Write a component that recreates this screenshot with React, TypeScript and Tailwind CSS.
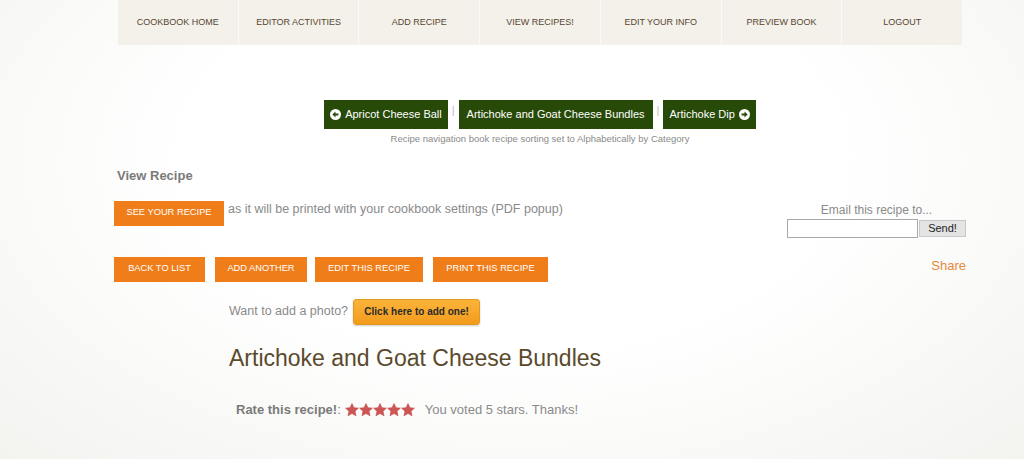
import React from "react";

const navItems = [
  "Cookbook Home",
  "Editor Activities",
  "Add Recipe",
  "View Recipes!",
  "Edit Your Info",
  "Preview Book",
  "Logout",
];

const CircleArrow = ({ dir }: { dir: "left" | "right" }) => (
  <svg width="11" height="11" viewBox="0 0 12 12" className="shrink-0">
    <circle cx="6" cy="6" r="6" fill="#ffffff" />
    {dir === "left" ? (
      <path d="M2.6 6 L6 2.8 V4.8 H9.2 V7.2 H6 V9.2 Z" fill="#2a4a0c" />
    ) : (
      <path d="M9.4 6 L6 2.8 V4.8 H2.8 V7.2 H6 V9.2 Z" fill="#2a4a0c" />
    )}
  </svg>
);

const Star = () => (
  <svg width="14" height="14" viewBox="0 0 24 24">
    <path
      d="M12 1 L15.3 8 L23 8.8 L17.2 14 L18.9 22 L12 18 L5.1 22 L6.8 14 L1 8.8 L8.7 8 Z"
      fill="#cf5454"
      stroke="#c24848"
      strokeWidth="1"
      strokeLinejoin="round"
    />
  </svg>
);

const OrangeBtn = ({ label, w }: { label: string; w: string }) => (
  <div
    className={`${w} flex h-[25px] items-center justify-center bg-[#ee7d1a] text-[9.3px] uppercase text-white`}
  >
    {label}
  </div>
);

const App = () => {
  return (
    <div className="min-h-[459px] w-[1024px] bg-[radial-gradient(ellipse_at_50%_35%,#ffffff_0%,#ffffff_45%,#f3f3f0_100%)] font-['Liberation_Sans',Arial,sans-serif]">
      <div className="ml-[114px] w-[852px]">
        {/* nav */}
        <nav className="mx-[4px] flex h-[45px] bg-[#f3f1ea]">
          {navItems.map((item, i) => (
            <div
              key={item}
              className={`flex flex-1 items-center justify-center text-[9px] uppercase text-[#574631] ${
                i > 0 ? "border-l border-[#fbfaf6]" : ""
              }`}
            >
              {item}
            </div>
          ))}
        </nav>

        {/* recipe navigation */}
        <div className="mt-[55px] flex items-center justify-center">
          <div className="flex h-[29px] items-center gap-[4px] bg-[#284a08] px-[6px] text-[11px] text-white">
            <CircleArrow dir="left" />
            Apricot Cheese Ball
          </div>
          <span className="mx-[4px] -mt-[8px] text-[11px] text-[#bbbbbb]">|</span>
          <div className="flex h-[29px] items-center bg-[#284a08] px-[8px] text-[11px] text-white">
            Artichoke and Goat Cheese Bundles
          </div>
          <span className="mx-[4px] -mt-[8px] text-[11px] text-[#bbbbbb]">|</span>
          <div className="flex h-[29px] items-center gap-[4px] bg-[#284a08] px-[6px] text-[11px] text-white">
            Artichoke Dip
            <CircleArrow dir="right" />
          </div>
        </div>
        <p className="mt-[3px] text-center text-[9.5px] text-[#8a8a8a]">
          Recipe navigation book recipe sorting set to Alphabetically by Category
        </p>

        <h2 className="mt-[20px] pl-[3px] text-[13px] font-bold text-[#7a7a7a]">View Recipe</h2>

        {/* see recipe + email */}
        <div className="mt-[15px] flex items-start justify-between">
          <div className="flex items-start">
            <OrangeBtn label="See your recipe" w="w-[110px]" />
            <span className="ml-[4px] -mt-[1px] text-[12.5px] text-[#8a8a8a]">
              as it will be printed with your cookbook settings (PDF popup)
            </span>
          </div>
          <div className="mt-[2px] flex flex-col items-center">
            <span className="text-[12px] leading-[14px] text-[#8a8a8a]">Email this recipe to...</span>
            <div className="mt-[2px] flex items-center">
              <div className="h-[19px] w-[131px] border border-[#a9a9a9] bg-white" />
              <div className="ml-[1px] flex h-[17px] w-[47px] items-center justify-center border border-[#c8c8c8] bg-[#e4e4e4] text-[11px] text-[#222]">
                Send!
              </div>
            </div>
          </div>
        </div>

        {/* action buttons */}
        <div className="mt-[19px] flex items-start justify-between">
          <div className="flex">
            <OrangeBtn label="Back to list" w="w-[91px]" />
            <div className="ml-[10px]">
              <OrangeBtn label="Add another" w="w-[92px]" />
            </div>
            <div className="ml-[8px]">
              <OrangeBtn label="Edit this recipe" w="w-[108px]" />
            </div>
            <div className="ml-[10px]">
              <OrangeBtn label="Print this recipe" w="w-[115px]" />
            </div>
          </div>
          <span className="-mt-[1px] text-[13px] text-[#e4893a]">Share</span>
        </div>

        {/* photo */}
        <div className="mt-[17px] flex items-center pl-[115px]">
          <span className="text-[12.5px] text-[#8a8a8a]">Want to add a photo?</span>
          <div className="ml-[5px] flex h-[26px] w-[127px] items-center justify-center rounded-[3px] border border-[#e29a1e] bg-gradient-to-b from-[#fbb43a] to-[#f29b1a] text-[10px] font-bold text-[#2a2a2a] shadow-[0_1px_2px_rgba(0,0,0,0.2)]">
            Click here to add one!
          </div>
        </div>

        <h1 className="mt-[18px] pl-[115px] text-[23px] leading-[30px] text-[#5a4a2c]">
          Artichoke and Goat Cheese Bundles
        </h1>

        {/* rating */}
        <div className="mt-[27px] flex items-center pl-[122px] text-[13px]">
          <span className="font-bold text-[#7a7a7a]">Rate this recipe!</span>
          <span className="text-[#7a7a7a]">:</span>
          <span className="ml-[4px] flex">
            <Star />
            <Star />
            <Star />
            <Star />
            <Star />
          </span>
          <span className="ml-[10px] text-[#8a8a8a]">You voted 5 stars. Thanks!</span>
        </div>
      </div>
    </div>
  );
};

export default App;
